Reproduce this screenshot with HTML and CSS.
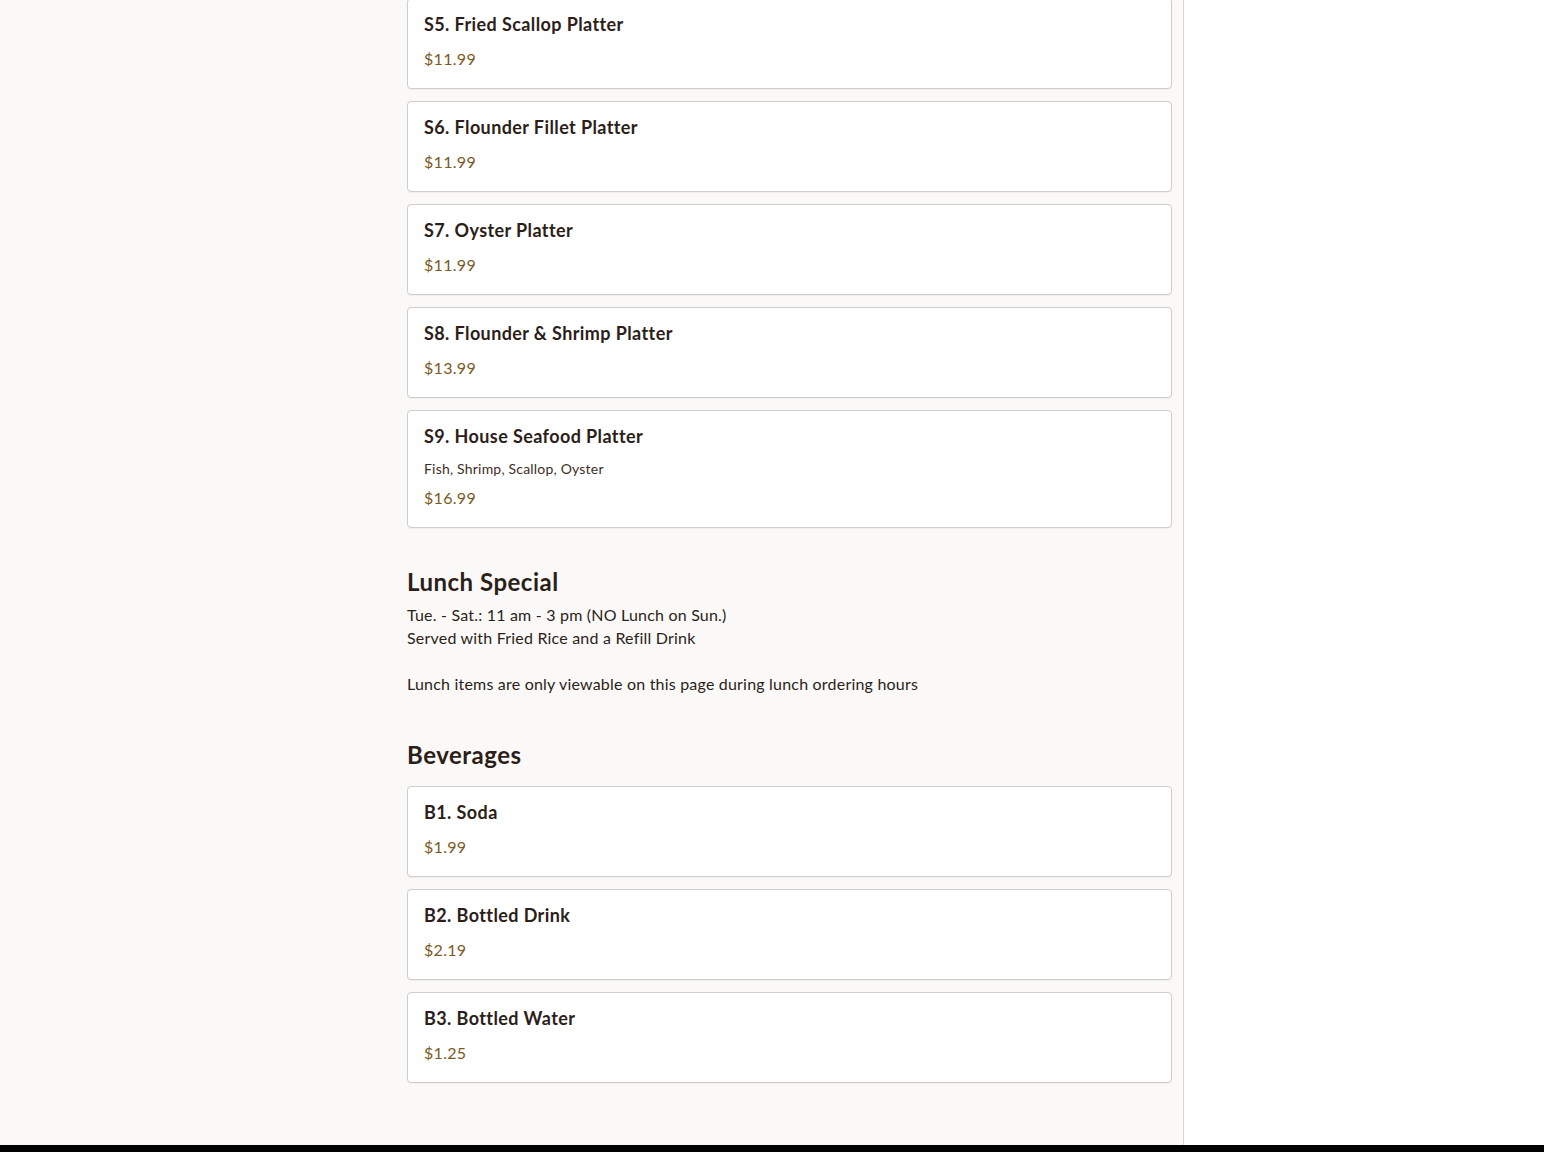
FILE: index.html
```html
<!DOCTYPE html>
<html lang="en">
<head>
<meta charset="utf-8">
<title>Menu</title>
<link rel="stylesheet" href="styles.css">
</head>
<body>
<div class="layout">
  <main class="main">
    <div class="content">
      <section class="section first">
        <div class="cards">
          <div class="card"><div class="title">S5. Fried Scallop Platter</div><div class="price">$11.99</div></div>
          <div class="card"><div class="title">S6. Flounder Fillet Platter</div><div class="price">$11.99</div></div>
          <div class="card"><div class="title">S7. Oyster Platter</div><div class="price">$11.99</div></div>
          <div class="card"><div class="title">S8. Flounder &amp; Shrimp Platter</div><div class="price">$13.99</div></div>
          <div class="card"><div class="title">S9. House Seafood Platter</div><div class="desc">Fish, Shrimp, Scallop, Oyster</div><div class="price">$16.99</div></div>
        </div>
      </section>
      <section class="section lunch">
        <h2 class="heading">Lunch Special</h2>
        <p class="info">Tue. - Sat.: 11 am - 3 pm (NO Lunch on Sun.)<br>Served with Fried Rice and a Refill Drink<br><br>Lunch items are only viewable on this page during lunch ordering hours</p>
      </section>
      <section class="section bev">
        <h2 class="heading">Beverages</h2>
        <div class="cards">
          <div class="card"><div class="title">B1. Soda</div><div class="price">$1.99</div></div>
          <div class="card"><div class="title">B2. Bottled Drink</div><div class="price">$2.19</div></div>
          <div class="card"><div class="title">B3. Bottled Water</div><div class="price">$1.25</div></div>
        </div>
      </section>
    </div>
  </main>
  <aside class="side"></aside>
</div>
<footer class="footer"></footer>
</body>
</html>
```
FILE: styles.css
```css
html, body {
  margin: 0;
  padding: 0;
  background: #ffffff;
}
body {
  font-family: "Lato", "Noto Sans", sans-serif;
  color: #2c1e18;
}
.layout {
  display: flex;
  align-items: stretch;
}
.main {
  background: #faf9f7;
  border-right: 1px solid #d6d4d0;
  box-sizing: border-box;
  width: 1184px;
}
.content {
  width: 765px;
  margin-left: 407px;
  padding-bottom: 62px;
}
.section.first {
  margin-top: -2px;
}
.cards {
  display: flex;
  flex-direction: column;
  gap: 12px;
}
.card {
  background: #ffffff;
  border: 1px solid #cfcdc9;
  border-radius: 4px;
  padding: 15px 16px 17px;
  box-shadow: 0 1px 1px rgba(0,0,0,0.04);
}
.title {
  font-size: 18px;
  font-weight: 700;
  line-height: 21px;
  margin-bottom: 12px;
  color: #2c1e18;
  letter-spacing: 0.4px;
}
.desc {
  font-size: 14px;
  line-height: 20px;
  margin-bottom: 7px;
  color: #3e2e26;
  letter-spacing: 0.2px;
}
.price {
  font-size: 16px;
  line-height: 24px;
  color: #7a5a1e;
  letter-spacing: 0.3px;
}
.heading {
  margin: 0;
  font-size: 24px;
  line-height: 32px;
  font-weight: 700;
  color: #2c1e18;
  letter-spacing: 0.5px;
}
.lunch {
  margin-top: 38px;
}
.info {
  margin: 5px 0 0;
  font-size: 16px;
  line-height: 23px;
  color: #2c1e18;
  letter-spacing: 0.2px;
}
.bev {
  margin-top: 44px;
}
.bev .heading {
  margin-bottom: 15px;
}
.side {
  flex: 1;
  background: #ffffff;
}
.footer {
  height: 40px;
  background: #000000;
}
```
